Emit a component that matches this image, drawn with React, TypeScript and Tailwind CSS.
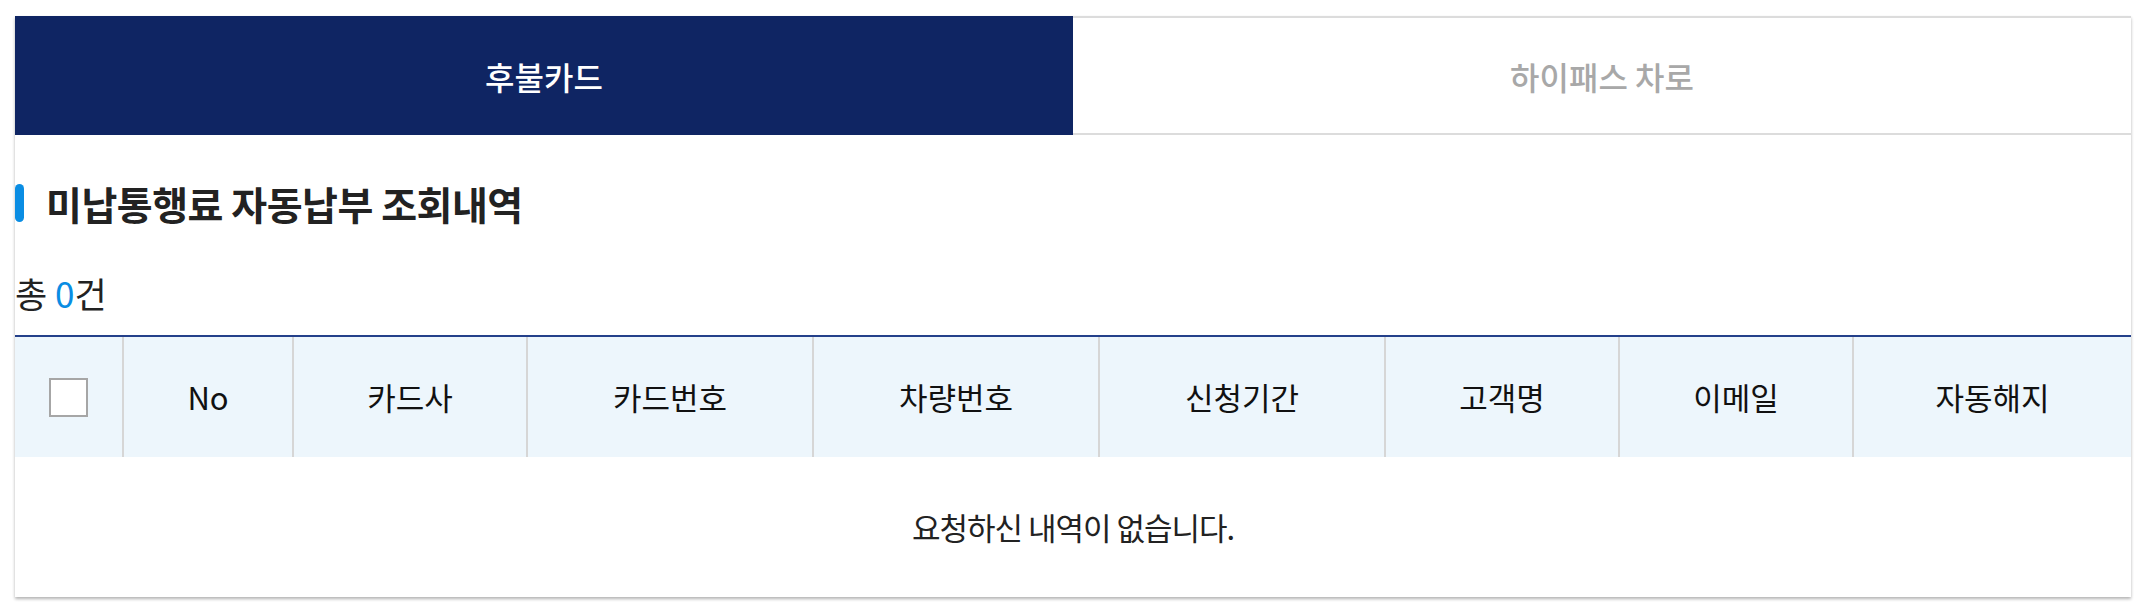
import React from 'react';

const font = { fontFamily: '"Noto Sans CJK KR", "Noto Sans", sans-serif' };

const columns = [
  { key: 'check', label: '', width: 'w-[107px]' },
  { key: 'no', label: 'No', width: 'w-[170px]' },
  { key: 'card', label: '카드사', width: 'w-[234px]' },
  { key: 'cardNo', label: '카드번호', width: 'w-[286px]' },
  { key: 'carNo', label: '차량번호', width: 'w-[286px]' },
  { key: 'period', label: '신청기간', width: 'w-[286px]' },
  { key: 'name', label: '고객명', width: 'w-[234px]' },
  { key: 'email', label: '이메일', width: 'w-[234px]' },
  { key: 'auto', label: '자동해지', width: 'flex-1' },
];

function Tabs() {
  return (
    <div className="grid grid-cols-2 h-[119px]">
      <button className="flex items-center justify-center bg-[#0f2563] text-[32px] font-medium text-white">
        후불카드
      </button>
      <button className="flex items-center justify-center border-y-2 border-[#dcdcdc] bg-white text-[32px] font-medium text-[#a8a8a8]">
        하이패스 차로
      </button>
    </div>
  );
}

export default function App() {
  return (
    <div className="min-h-screen bg-white px-[15px] pt-[16px]" style={font}>
      <div className="bg-white shadow-[0_2px_3px_rgba(0,0,0,0.3)]">
        <Tabs />

        <div className="mt-[48px] flex h-[40px] items-center gap-[22px]">
          <span className="h-[38px] w-[9px] rounded-full bg-[#0a8de3]" />
          <h2 className="text-[39px] font-bold tracking-[-0.5px] text-[#222]">미납통행료 자동납부 조회내역</h2>
        </div>

        <div className="mt-[50px] text-[35px] leading-[40px] text-[#222]">
          총 <span className="text-[#0a8de3]">0</span>건
        </div>

        <div className="mt-[22px] border-t-2 border-[#24408a]">
          <div className="flex h-[120px] bg-[#edf6fc]">
            {columns.map((col, i) => (
              <div
                key={col.key}
                className={`${col.width} flex items-center justify-center text-[31px] text-[#111] ${
                  i > 0 ? 'border-l-2 border-[#d6d6d6]' : ''
                }`}
              >
                {col.key === 'check' ? (
                  <span className="block h-[39px] w-[39px] border-2 border-[#a6a6a6] bg-white" />
                ) : (
                  col.label
                )}
              </div>
            ))}
          </div>
          <div className="flex h-[140px] items-center justify-center text-[31px] tracking-[-1px] text-[#222]">
            요청하신 내역이 없습니다.
          </div>
        </div>
      </div>
    </div>
  );
}
